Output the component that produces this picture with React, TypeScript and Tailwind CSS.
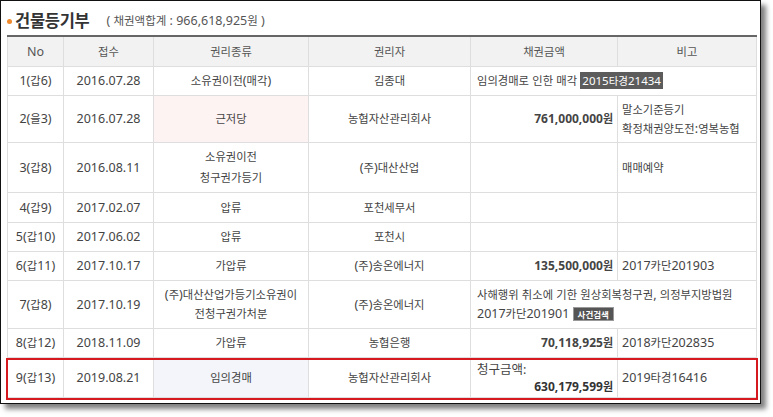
import React from "react";

const font = { fontFamily: '"Noto Sans", "Noto Sans CJK KR", sans-serif' };

const HANGUL = /([\u3131-\u318E\uAC00-\uD7A3]+)/;

function K({ t, k = "text-[11.3px]" }: { t: string; k?: string }) {
  return (
    <>
      {t.split(HANGUL).map((s, i) =>
        i % 2 === 1 ? (
          <span key={i} className={k} style={{ fontFamily: '"Noto Sans CJK KR", sans-serif' }}>
            {s}
          </span>
        ) : (
          <React.Fragment key={i}>{s}</React.Fragment>
        )
      )}
    </>
  );
}

const td = "border border-[#dedede] text-[12.5px] text-[#444] px-[5px] leading-[19px] whitespace-nowrap";
const c = `${td} text-center`;
const amt = `${td} text-right font-bold text-[#333] text-[12px] pr-[4px]`;

export default function App() {
  return (
    <div className="w-[773px] h-[417px] bg-white overflow-hidden" style={font}>
      <div className="w-[761px] h-[404px] border border-[#111] bg-white shadow-[5px_5px_5px_rgba(0,0,0,0.5)] pl-[6px] pr-[4px]">
        <div className="flex items-center h-[34px] pt-[7px] pb-[2px]">
          <span className="w-[5px] h-[5px] rounded-full bg-[#f08a2c] mr-[3px] mt-[1px]" />
          <span
            className="text-[16.5px] font-bold text-[#333] leading-none tracking-[-0.3px]"
            style={{ fontFamily: '"Noto Sans CJK KR", sans-serif' }}
          >
            건물등기부
          </span>
          <span className="text-[12.5px] text-[#555] ml-[17px] leading-none mt-[2px]">
            <K t="( 채권액합계 : 966,618,925원 )" k="text-[11.5px]" />
          </span>
        </div>
        <div className="relative">
          <table className="border-collapse table-fixed w-[749px] border-t-2 border-t-[#666]">
            <colgroup>
              <col className="w-[56px]" />
              <col className="w-[90px]" />
              <col className="w-[155px]" />
              <col className="w-[162px]" />
              <col className="w-[147px]" />
              <col className="w-[139px]" />
            </colgroup>
            <thead>
              <tr className="h-[30px] bg-[#f2f2f2]">
                {["No", "접수", "권리종류", "권리자", "채권금액", "비고"].map((h) => (
                  <th key={h} className={`${td} font-normal text-center text-[#555] border-t-0`}>
                    <K t={h} />
                  </th>
                ))}
              </tr>
            </thead>
            <tbody>
              <tr className="h-[29px]">
                <td className={c}><K t="1(갑6)" /></td>
                <td className={c}>2016.07.28</td>
                <td className={c}><K t="소유권이전(매각)" /></td>
                <td className={c}><K t="김종대" /></td>
                <td className={`${td} pl-[6px]`} colSpan={2}>
                  <K t="임의경매로 인한 매각" />{" "}
                  <span className="bg-[#5c5c5c] text-white px-[2px] py-[1px] text-[11.5px]">
                    <K t="2015타경21434" k="text-[10.5px]" />
                  </span>
                </td>
              </tr>
              <tr className="h-[47px]">
                <td className={c}><K t="2(을3)" /></td>
                <td className={c}>2016.07.28</td>
                <td className={`${c} bg-[#fdf3f3]`}><K t="근저당" /></td>
                <td className={c}><K t="농협자산관리회사" /></td>
                <td className={amt}><K t="761,000,000원" k="text-[11px]" /></td>
                <td className={`${td} pl-[4px]`}>
                  <K t="말소기준등기" />
                  <br />
                  <K t="확정채권양도전:영복농협" />
                </td>
              </tr>
              <tr className="h-[50px]">
                <td className={c}><K t="3(갑8)" /></td>
                <td className={c}>2016.08.11</td>
                <td className={`${c} leading-[20px]`}>
                  <K t="소유권이전" />
                  <br />
                  <K t="청구권가등기" />
                </td>
                <td className={c}><K t="(주)대산산업" /></td>
                <td className={td}></td>
                <td className={`${td} pl-[4px]`}><K t="매매예약" /></td>
              </tr>
              <tr className="h-[30px]">
                <td className={c}><K t="4(갑9)" /></td>
                <td className={c}>2017.02.07</td>
                <td className={c}><K t="압류" /></td>
                <td className={c}><K t="포천세무서" /></td>
                <td className={td}></td>
                <td className={td}></td>
              </tr>
              <tr className="h-[29px]">
                <td className={c}><K t="5(갑10)" /></td>
                <td className={c}>2017.06.02</td>
                <td className={c}><K t="압류" /></td>
                <td className={c}><K t="포천시" /></td>
                <td className={td}></td>
                <td className={td}></td>
              </tr>
              <tr className="h-[29px]">
                <td className={c}><K t="6(갑11)" /></td>
                <td className={c}>2017.10.17</td>
                <td className={c}><K t="가압류" /></td>
                <td className={c}><K t="(주)송온에너지" /></td>
                <td className={amt}><K t="135,500,000원" k="text-[11px]" /></td>
                <td className={`${td} pl-[4px]`}><K t="2017카단201903" /></td>
              </tr>
              <tr className="h-[48px]">
                <td className={c}><K t="7(갑8)" /></td>
                <td className={c}>2017.10.19</td>
                <td className={`${c} leading-[18px]`}>
                  <K t="(주)대산산업가등기소유권이" />
                  <br />
                  <K t="전청구권가처분" />
                </td>
                <td className={c}><K t="(주)송온에너지" /></td>
                <td className={`${td} pl-[6px] leading-[18px]`} colSpan={2}>
                  <K t="사해행위 취소에 기한 원상회복청구권, 의정부지방법원" />
                  <br />
                  <K t="2017카단201901" />{" "}
                  <span
                    className="bg-[#555] text-white px-[4px] text-[8.5px] font-bold align-middle border border-[#999] leading-[11px]"
                    style={{ fontFamily: '"Noto Sans CJK KR", sans-serif' }}
                  >
                    사건검색
                  </span>
                </td>
              </tr>
              <tr className="h-[29px]">
                <td className={c}><K t="8(갑12)" /></td>
                <td className={c}>2018.11.09</td>
                <td className={c}><K t="가압류" /></td>
                <td className={c}><K t="농협은행" /></td>
                <td className={amt}><K t="70,118,925원" k="text-[11px]" /></td>
                <td className={`${td} pl-[4px]`}><K t="2018카단202835" /></td>
              </tr>
              <tr className="h-[40px]">
                <td className={c}><K t="9(갑13)" /></td>
                <td className={c}>2019.08.21</td>
                <td className={`${c} bg-[#f3f5fa]`}><K t="임의경매" /></td>
                <td className={c}><K t="농협자산관리회사" /></td>
                <td className={`${td} pl-[6px] pr-[4px]`}>
                  <div className="leading-[17px]"><K t="청구금액:" k="text-[12.5px]" /></div>
                  <div className="text-right font-bold text-[#333] text-[12px] leading-[17px]">
                    <K t="630,179,599원" k="text-[11px]" />
                  </div>
                </td>
                <td className={`${td} pl-[4px]`}><K t="2019타경16416" /></td>
              </tr>
            </tbody>
          </table>
          <div className="absolute left-[-1px] right-[-2px] bottom-[-2px] h-[42px] border-[2.5px] border-[#d6191e] pointer-events-none" />
        </div>
      </div>
    </div>
  );
}
